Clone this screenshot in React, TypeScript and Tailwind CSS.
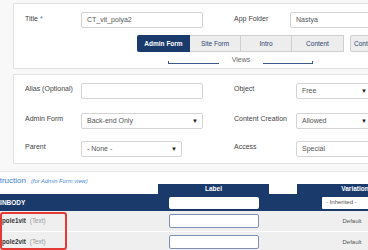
import React from "react";

const navy = "bg-[#1b3a6c]";

type FieldProps = {
	value?: string;
	select?: boolean;
	className?: string;
};

const Field: React.FC<FieldProps> = ({ value, select, className }) => (
	<div
		className={`flex h-[16px] items-center justify-between rounded-[2px] border border-[#d4d4d4] bg-white pl-[5px] pr-[4px] text-[7px] text-[#555] ${className ?? ""}`}
	>
		<span>{value}</span>
		{select && <span className="text-[6px] text-[#222]">▼</span>}
	</div>
);

const Label: React.FC<{ children: React.ReactNode; className?: string }> = ({
	children,
	className,
}) => (
	<div className={`text-[7px] leading-[11px] text-[#444] ${className ?? ""}`}>
		{children}
	</div>
);

const tabs = [
	{ name: "Admin Form", width: "w-[53px]", active: true },
	{ name: "Site Form", width: "w-[51px]", active: false },
	{ name: "Intro", width: "w-[51px]", active: false },
	{ name: "Content", width: "w-[52px]", active: false },
];

const rows = ["pole1vit", "pole2vit"];

export default function App() {
	return (
		<div className="relative h-[250px] w-[368px] overflow-hidden bg-[#f8f8f8] font-['Liberation_Sans',Arial,sans-serif]">
			<div className="w-[520px]">
				{/* general settings */}
				<div className="ml-[13px] mt-[3px] h-[66px] border border-[#e2e2e2] bg-white">
					<div className="flex items-start pt-[8px]">
						<Label className="w-[67px] pl-[11px] pt-[1px]">
							Title <span className="text-[#3a7bd5]">*</span>
						</Label>
						<Field value="CT_vit_polya2" className="w-[122px]" />
						<Label className="w-[87px] pl-[31px] pt-[1px]">App Folder</Label>
						<Field value="Nastya" className="w-[120px]" />
					</div>

					<div className="ml-[123px] mt-[7px] flex h-[17px]">
						{tabs.map((tab) => (
							<div
								key={tab.name}
								className={`flex ${tab.width} items-center justify-center text-[6.5px] ${
									tab.active
										? `${navy} rounded-l-[2px] font-bold text-white`
										: "border-y border-r border-[#cfcfcf] bg-[#ededed] text-[#2a4470]"
								}`}
							>
								{tab.name}
							</div>
						))}
						<div className="ml-[6px] flex w-[60px] items-center rounded-[2px] border border-[#cfcfcf] bg-[#ededed] pl-[3px] text-[6.5px] text-[#2a4470]">
							Content Type
						</div>
					</div>

					<div className="ml-[154px] mt-[4px] flex items-end">
						<div className="h-[3px] w-[51px] border-b border-l border-[#3c5a8c]" />
						<div className="w-[44px] text-center text-[7px] leading-[8px] text-[#666]">
							Views
						</div>
						<div className="h-[3px] w-[50px] border-b border-r border-[#3c5a8c]" />
					</div>
				</div>

				{/* options */}
				<div className="ml-[13px] mt-[5px] h-[90px] border border-[#e2e2e2] bg-white pt-[8px]">
					<div className="flex items-start">
						<Label className="w-[67px] pl-[11px]">Alias (Optional)</Label>
						<Field className="w-[122px]" />
						<Label className="w-[93px] pl-[31px]">Object</Label>
						<Field value="Free" select className="w-[76px]" />
					</div>
					<div className="mt-[14px] flex items-start">
						<Label className="w-[67px] pl-[11px]">Admin Form</Label>
						<Field value="Back-end Only" select className="w-[122px]" />
						<Label className="w-[93px] pl-[31px]">Content Creation</Label>
						<Field value="Allowed" select className="w-[76px]" />
					</div>
					<div className="mt-[12px] flex items-start">
						<Label className="w-[67px] pl-[11px]">Parent</Label>
						<Field value="- None -" select className="w-[101px]" />
						<Label className="ml-[21px] w-[93px] pl-[31px]">Access</Label>
						<Field value="Special" className="w-[76px]" />
					</div>
				</div>

				{/* construction table */}
				<div className="mt-[7px] border-t border-[#e6e6e6] bg-white">
					<div className="flex h-[22px] items-end">
						<div className="w-[158px] self-end pb-[4px]">
							<span className="ml-[-19px] text-[8px] leading-[10px] text-[#3f82cf]">
								Construction
							</span>
							<span className="ml-[5px] text-[5.8px] italic text-[#4a88d6]">
								(for Admin Form view)
							</span>
						</div>
						<div
							className={`flex h-[10px] w-[111px] items-center justify-center ${navy} text-[6.5px] font-bold text-white`}
						>
							Label
						</div>
						<div className="w-[28px]" />
						<div
							className={`flex h-[10px] w-[116px] items-center justify-center ${navy} text-[6.5px] font-bold text-white`}
						>
							Variation
						</div>
					</div>

					<div className={`flex h-[17px] items-center ${navy}`}>
						<div className="w-[158px] text-[6.5px] font-bold text-white">
							<span className="ml-[-10px]">MAINBODY</span>
						</div>
						<div className="flex w-[111px] justify-center">
							<div className="h-[12px] w-[90px] rounded-[2px] bg-white" />
						</div>
						<div className="w-[53px]" />
						<div className="flex h-[12px] w-[66px] items-center rounded-[1px] bg-white pl-[4px] text-[6px] text-[#555]">
							- Inherited -
						</div>
					</div>

					{rows.map((name) => (
						<div
							key={name}
							className="flex h-[21px] items-start border-b border-white bg-[#efefef] pt-[3px]"
						>
							<div className="flex w-[158px] items-center pl-[2px] pt-[3px] text-[6.3px] leading-[8px]">
								<span className="font-bold text-[#333]">{name}</span>
								<span className="ml-[4px] text-[#999]">(Text)</span>
							</div>
							<div className="flex w-[111px] justify-center">
								<div className="h-[14px] w-[90px] rounded-[2px] border border-[#7d8fb3] bg-white" />
							</div>
							<div className="w-[28px]" />
							<div className="w-[116px] pr-[6px] pt-[4px] text-center text-[6px] leading-[7px] text-[#555]">
								Default
							</div>
						</div>
					))}
				</div>
			</div>

			{/* highlight annotation */}
			<div className="absolute left-0 top-[212px] h-[38px] w-[67px] rounded-[3px] border-2 border-[#e53935]" />
		</div>
	);
}
